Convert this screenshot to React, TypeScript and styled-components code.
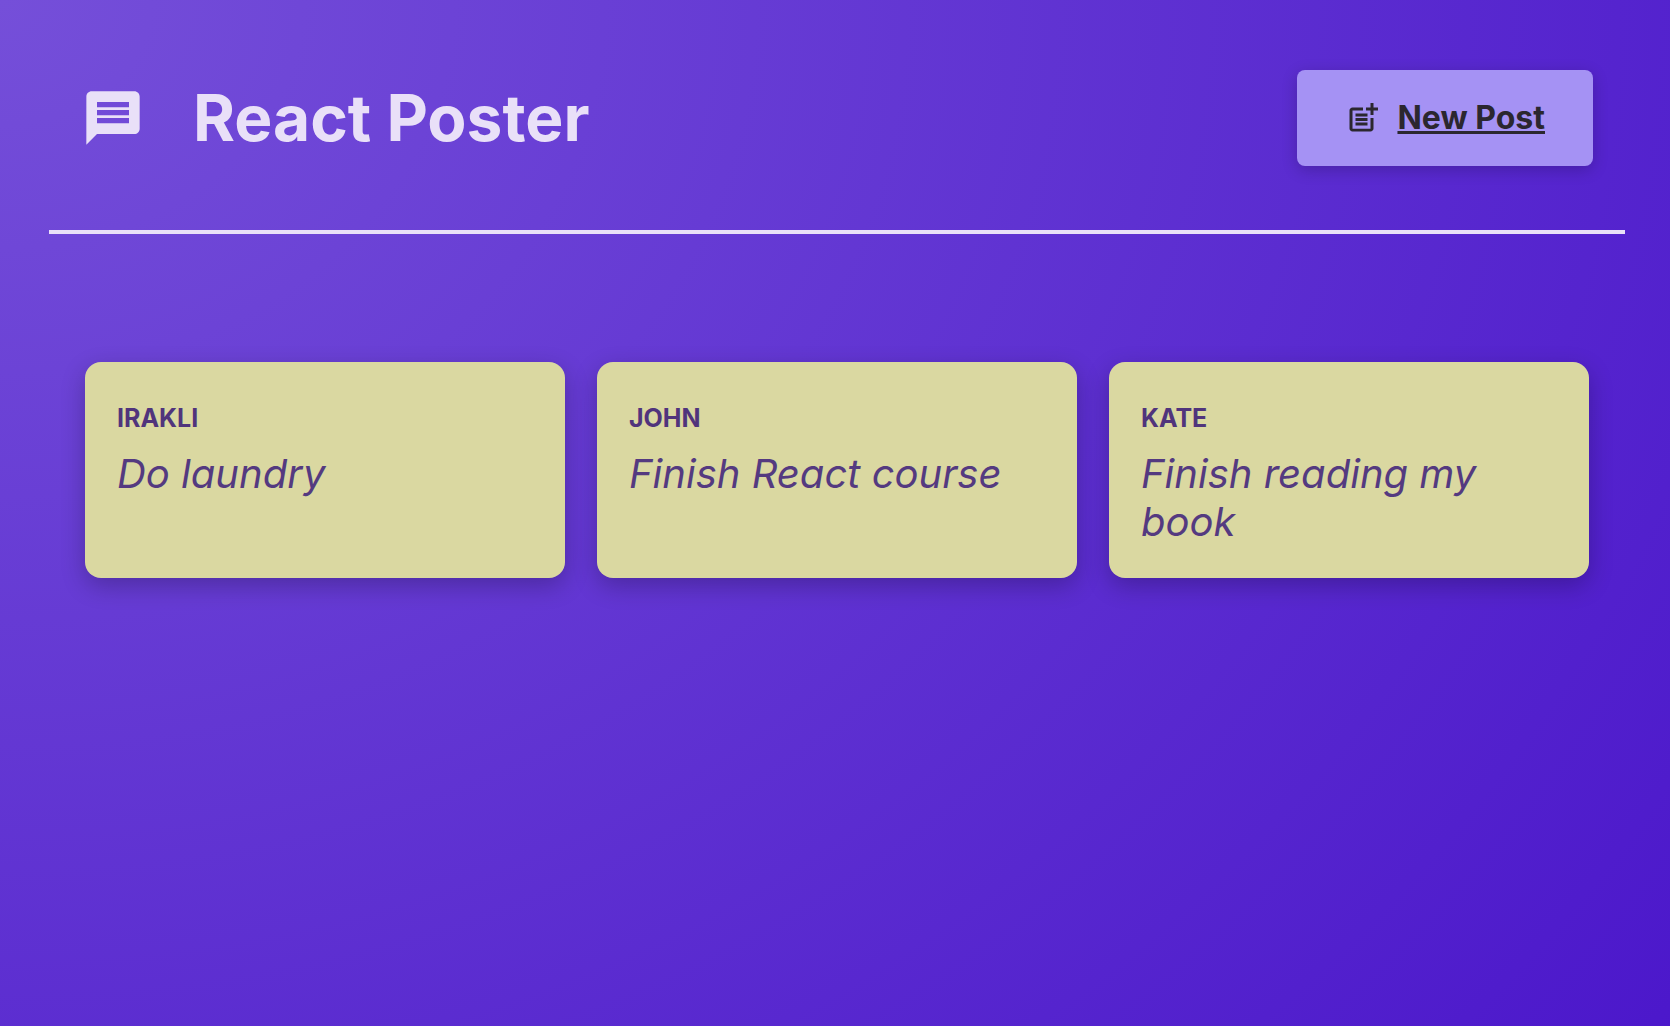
import React from 'react';
import styled, { createGlobalStyle } from 'styled-components';
import { MdMessage, MdPostAdd } from 'react-icons/md';

const GlobalStyle = createGlobalStyle`
  * {
    box-sizing: border-box;
  }

  html {
    min-height: 100%;
  }

  body {
    margin: 0;
    min-height: 100vh;
    font-family: Inter, Roboto, 'Liberation Sans', sans-serif;
    color: #e9e0f8;
    background: radial-gradient(ellipse 142% 190% at top left, #754fd9, #4610c9) no-repeat;
  }
`;

const Page = styled.div`
  padding: 6px 45px 64px 49px;
`;

const Header = styled.header`
  display: flex;
  justify-content: space-between;
  align-items: center;
  padding: 64px 32px;
  border-bottom: 4px solid #e9e0f8;
`;

const Logo = styled.h1`
  display: flex;
  align-items: center;
  gap: 48px;
  margin: 0;
  font-size: 64px;
  line-height: 80px;
  font-weight: 700;
`;

const NewPostLink = styled.a`
  display: flex;
  align-items: center;
  gap: 16px;
  height: 96px;
  padding: 0 48px;
  border-radius: 8px;
  background: #a592f4;
  color: #2b272f;
  box-shadow: 0 4px 16px rgba(0, 0, 0, 0.2);
  font-size: 32px;
  line-height: 40px;
  font-weight: 700;
  text-decoration: none;

  span {
    text-decoration: underline;
    text-decoration-thickness: 3px;
  }
`;

const PostList = styled.ul`
  display: grid;
  grid-template-columns: repeat(auto-fill, minmax(400px, 1fr));
  gap: 32px;
  margin: 128px 36px 0;
  padding: 0;
  list-style: none;
`;

const PostCard = styled.li`
  padding: 40px 32px 32px;
  border-radius: 16px;
  background: #dad8a1;
  box-shadow: 0 8px 24px rgba(0, 0, 0, 0.24);
`;

const Author = styled.p`
  margin: 0 0 16px;
  color: #50347c;
  font-size: 25px;
  line-height: 32px;
  font-weight: 700;
  text-transform: uppercase;
`;

const Message = styled.p`
  margin: 0;
  color: #543a80;
  font-size: 40px;
  line-height: 48px;
  font-style: italic;
`;

const posts = [
  { author: 'Irakli', body: 'Do laundry' },
  { author: 'John', body: 'Finish React course' },
  { author: 'Kate', body: 'Finish reading my book' },
];

export default function App() {
  return (
    <>
      <GlobalStyle />
      <Page>
        <Header>
          <Logo>
            <MdMessage aria-hidden="true" />
            React Poster
          </Logo>
          <NewPostLink href="#create-post">
            <MdPostAdd size={36} aria-hidden="true" />
            <span>New Post</span>
          </NewPostLink>
        </Header>
        <main>
          <PostList>
            {posts.map((post) => (
              <PostCard key={post.author}>
                <Author>{post.author}</Author>
                <Message>{post.body}</Message>
              </PostCard>
            ))}
          </PostList>
        </main>
      </Page>
    </>
  );
}
